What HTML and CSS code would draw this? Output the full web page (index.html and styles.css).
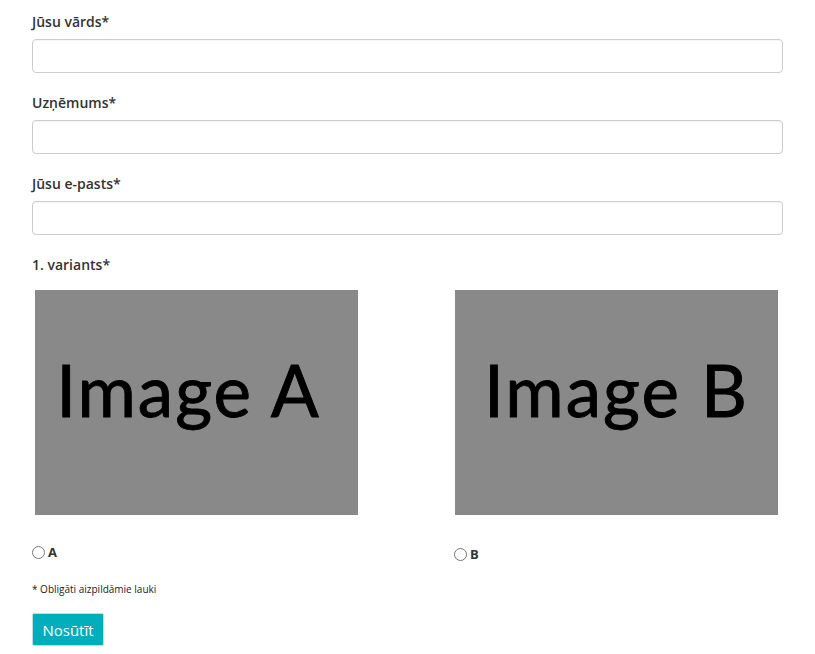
FILE: index.html
```html
<!DOCTYPE html>
<html lang="lv">
<head>
<meta charset="utf-8">
<title>Forma</title>
<link rel="stylesheet" href="styles.css">
</head>
<body>
<form class="form">
  <div class="field">
    <label class="label">Jūsu vārds*</label>
    <input class="input" type="text">
  </div>
  <div class="field">
    <label class="label">Uzņēmums*</label>
    <input class="input" type="text">
  </div>
  <div class="field">
    <label class="label">Jūsu e-pasts*</label>
    <input class="input" type="email">
  </div>
  <div class="field field-choice">
    <span class="label">1. variants*</span>
    <div class="options">
      <div class="option option-a">
        <div class="picture picture-a">Image A</div>
        <label class="radio-row"><input class="radio" type="radio" name="v1"><span class="radio-text">A</span></label>
      </div>
      <div class="option option-b">
        <div class="picture">Image B</div>
        <label class="radio-row"><input class="radio" type="radio" name="v1"><span class="radio-text">B</span></label>
      </div>
    </div>
  </div>
  <p class="note">* Obligāti aizpildāmie lauki</p>
  <button class="submit" type="button">Nosūtīt</button>
</form>
</body>
</html>
```
FILE: styles.css
```css
html, body {
  margin: 0;
  padding: 0;
  background: #ffffff;
}
body {
  font-family: "Open Sans", "Liberation Sans", sans-serif;
  color: #333333;
}
.form {
  width: 751px;
  padding: 12px 0 0 32px;
  display: flex;
  flex-direction: column;
}
.field {
  display: flex;
  flex-direction: column;
  margin-bottom: 20px;
}
.label {
  font-size: 14px;
  line-height: 20px;
  font-weight: 600;
  color: #333333;
  margin-bottom: 7px;
}
.input {
  box-sizing: border-box;
  height: 34px;
  width: 100%;
  margin: 0;
  border: 1px solid #cccccc;
  border-radius: 4px;
  background: #ffffff;
  box-shadow: inset 0 1px 1px rgba(0,0,0,0.04);
  font: 14px "Open Sans", sans-serif;
  padding: 6px 12px;
}
.field-choice {
  margin-bottom: 0;
}
.field-choice .label {
  margin-bottom: 15px;
}
.options {
  display: grid;
  grid-template-columns: 420px 1fr;
}
.option {
  display: flex;
  flex-direction: column;
}
.picture {
  box-sizing: border-box;
  width: 323px;
  height: 225px;
  margin-left: 3px;
  background: #898989;
  color: #000000;
  font-family: Lato, "Open Sans", sans-serif;
  font-size: 71px;
  letter-spacing: 2px;
  -webkit-text-stroke: 0.9px #000000;
  line-height: 1;
  display: flex;
  align-items: center;
  justify-content: center;
  padding-bottom: 26px;
}
.picture-a {
  padding-right: 16px;
}
.radio-row {
  display: flex;
  align-items: center;
  margin-top: 30px;
  height: 14px;
}
.option-b .radio-row {
  margin-top: 32px;
  margin-left: 2px;
}
.radio {
  width: 13px;
  height: 13px;
  margin: 0 3px 0 0;
}
.radio-text {
  font-size: 13px;
  font-weight: 700;
  color: #333333;
}
.note {
  font-size: 10px;
  line-height: 14px;
  margin: 21px 0 17px 0;
  color: #222222;
}
.submit {
  align-self: flex-start;
  box-sizing: border-box;
  width: 72px;
  height: 33px;
  padding: 0;
  background: #00adba;
  color: #ffffff;
  border: 1px solid #b9dfe2;
  border-radius: 2px;
  font-family: "Open Sans", sans-serif;
  font-size: 15px;
}
```
